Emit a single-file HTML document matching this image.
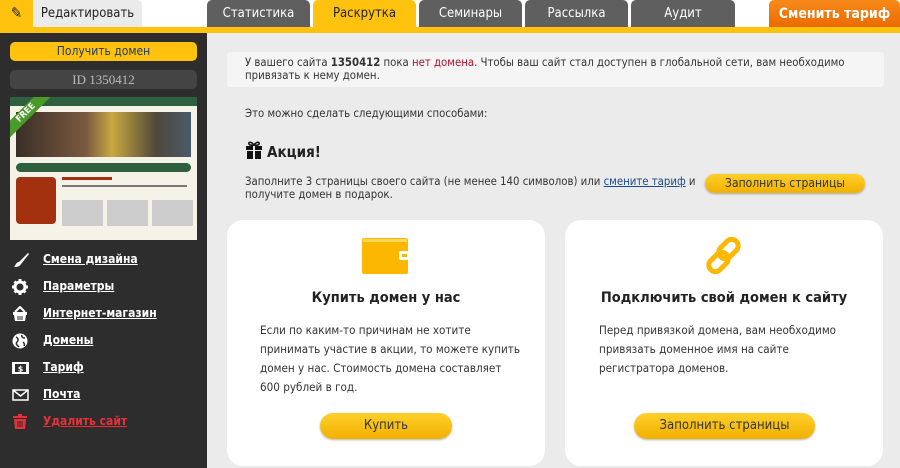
<!DOCTYPE html>
<html><head><meta charset="utf-8"><style>
*{margin:0;padding:0;box-sizing:border-box}
body{width:900px;height:468px;overflow:hidden;background:#ebebeb;font-family:"DejaVu Sans Condensed","DejaVu Sans",sans-serif;font-size:12px;color:#333;position:relative}
.ct{font-size:11.3px}
.top{position:absolute;left:0;top:0;width:900px;height:27px;background:#fff}
.yl{position:absolute;left:0;top:27px;width:900px;height:6px;background:#ffc20e}
.tab{position:absolute;top:0;height:27px;border-radius:5px 5px 0 0;background:#5f5f5f;color:#fff;font-size:13px;text-align:center;line-height:28px;font-family:"DejaVu Sans Condensed",sans-serif}
.side{position:absolute;left:0;top:33px;width:207px;height:435px;background:#2d2d2d}
.btn{position:absolute;border-radius:13px;background:linear-gradient(#ffd02a,#f0b000);box-shadow:0 1px 2px rgba(0,0,0,.3);text-align:center;color:#333}
.menu{position:absolute;left:43px;color:#fff;font-weight:bold;font-size:12px;text-decoration:underline}
.ic{position:absolute;left:12px;top:0}
.card{position:absolute;top:220px;width:318px;height:246px;background:#fff;border-radius:16px}
.card h3{position:absolute;top:70px;left:0;width:100%;text-align:center;font-size:14.5px;color:#222}
.card p{position:absolute;top:101px;left:33px;line-height:19px;font-size:11.6px;color:#333;white-space:nowrap}
</style></head><body>
<div class="top"></div>
<div class="yl"></div>
<div style="position:absolute;left:0;top:0;width:33px;height:27px;background:#ffc20e;color:#222;font-size:15px;text-align:center;line-height:27px">✎</div>
<div class="tab" style="left:33px;width:109px;background:#ebebeb;color:#222;border-radius:0 5px 0 0">Редактировать</div>
<div class="tab" style="left:207px;width:103px">Статистика</div>
<div class="tab" style="left:313px;width:103px;background:#ffc20e;color:#222">Раскрутка</div>
<div class="tab" style="left:419px;width:103px">Семинары</div>
<div class="tab" style="left:525px;width:103px">Рассылка</div>
<div class="tab" style="left:631px;width:104px">Аудит</div>
<div class="tab" style="left:769px;width:131px;background:linear-gradient(#f78a1a,#ec6a00);font-weight:bold;font-size:14px">Сменить тариф</div>
<div class="side">
<div style="position:absolute;left:10px;top:9px;width:187px;height:19px;line-height:19px;font-size:12px;border-radius:5px;background:#ffc20e;color:#1d3a6e;text-align:center">Получить домен</div>
<div style="position:absolute;left:10px;top:37px;width:187px;height:19px;line-height:19px;background:#444;border-radius:5px;text-align:center;color:#bbb;font-size:13px;font-family:'Liberation Serif',serif">ID 1350412</div>
<div style="position:absolute;left:10px;top:64px;width:187px;height:143px;background:#f5f2e8;overflow:hidden">
 <div style="height:9px;background:#2e6040"></div>
 <div style="margin:6px 6px 0;height:45px;background:linear-gradient(90deg,#3a2e28,#7a5a40 40%,#c8a840 55%,#50483a 80%,#4a5a6a)"></div>
 <div style="margin:6px 6px 0;height:9px;background:#2e6040;border-radius:5px"></div>
 <div style="position:absolute;left:6px;top:80px;width:40px;height:47px;background:#a3300f;border-radius:4px"></div>
 <div style="position:absolute;left:52px;top:80px;width:50px;height:3px;background:#a3300f"></div>
 <div style="position:absolute;left:52px;top:88px;width:125px;height:2px;background:#777"></div>
 <div style="position:absolute;left:52px;top:103px;width:41px;height:26px;background:#ccc"></div>
 <div style="position:absolute;left:97px;top:103px;width:41px;height:26px;background:#ccc"></div>
 <div style="position:absolute;left:142px;top:103px;width:41px;height:26px;background:#ccc"></div>
 <div style="position:absolute;left:-14px;top:10px;width:60px;height:12px;background:#4a9a2a;transform:rotate(-45deg);color:#fff;font-size:9px;font-weight:bold;text-align:center;line-height:12px">FREE</div>
</div>
<div style="position:absolute;left:0;top:219px;width:207px;height:14px"><svg class="ic" width="18" height="16"><path d="M16 1 L7 10 L9 12 L17 2Z M7 10 C4 10 4 13 2 15 C6 15 8 14 9 12Z" fill="#fff"/></svg><div class="menu" style="top:0">Смена дизайна</div></div>
<div style="position:absolute;left:0;top:246px;width:207px;height:14px"><svg class="ic" width="18" height="16"><circle cx="8" cy="8" r="5" fill="none" stroke="#fff" stroke-width="3"/><g stroke="#fff" stroke-width="3"><path d="M8 0v3M8 13v3M0 8h3M13 8h3M2.5 2.5l2 2M11.5 11.5l2 2M2.5 13.5l2-2M11.5 4.5l2-2"/></g></svg><div class="menu" style="top:0">Параметры</div></div>
<div style="position:absolute;left:0;top:273px;width:207px;height:14px"><svg class="ic" width="18" height="16"><path d="M3 6 L8 1 L13 6" stroke="#fff" stroke-width="2" fill="none"/><rect x="1" y="6" width="14" height="3" fill="#fff"/><path d="M2 9h12l-1 6H3Z" fill="#fff"/><path d="M6 10v4M8 10v4M10 10v4" stroke="#2d2d2d"/></svg><div class="menu" style="top:0">Интернет-магазин</div></div>
<div style="position:absolute;left:0;top:300px;width:207px;height:14px"><svg class="ic" width="18" height="16"><circle cx="8" cy="8" r="7.5" fill="#fff"/><path d="M4 4c2 1 3 3 1 5s1 4 2 5M10 2c-1 2 1 3 3 3M11 9c1 1 2 2 1 4" stroke="#2d2d2d" stroke-width="1.5" fill="none"/></svg><div class="menu" style="top:0">Домены</div></div>
<div style="position:absolute;left:0;top:327px;width:207px;height:14px"><svg class="ic" width="18" height="16"><rect x="0" y="2" width="17" height="12" fill="#fff"/><rect x="3" y="4" width="11" height="8" fill="#2d2d2d"/><text x="8.5" y="11.5" font-size="8" font-weight="bold" fill="#fff" text-anchor="middle" font-family="DejaVu Sans">$</text></svg><div class="menu" style="top:0">Тариф</div></div>
<div style="position:absolute;left:0;top:354px;width:207px;height:14px"><svg class="ic" width="18" height="16"><rect x="1" y="3" width="15" height="10" fill="none" stroke="#fff" stroke-width="1.5"/><path d="M1 3l7.5 6 7.5-6" stroke="#fff" stroke-width="1.5" fill="none"/></svg><div class="menu" style="top:0">Почта</div></div>
<div style="position:absolute;left:0;top:381px;width:207px;height:14px"><svg class="ic" width="18" height="16"><rect x="1" y="2" width="14" height="2" fill="#e8303a"/><rect x="6" y="0" width="4" height="2" fill="#e8303a"/><path d="M2 5h12l-1 10H3Z" fill="#e8303a"/><path d="M6 7v6M8 7v6M10 7v6" stroke="#2d2d2d"/></svg><div class="menu" style="top:0;color:#e8303a">Удалить сайт</div></div>
</div>
<div class="ct" style="position:absolute;left:227px;top:52px;width:657px;height:35px;background:#f5f5f5;border-radius:3px;padding:4px 18px;line-height:13px">У вашего сайта <b>1350412</b> пока <span style="color:#b0102a">нет домена</span>. Чтобы ваш сайт стал доступен в глобальной сети, вам необходимо привязать к нему домен.</div>
<div class="ct" style="position:absolute;left:245px;top:107px">Это можно сделать следующими способами:</div>
<svg style="position:absolute;left:245px;top:141px" width="18" height="18"><path d="M9 4C6 0 3 1 4 3s5 1 5 1 4 1 5-1-2-3-5 1" stroke="#111" stroke-width="1.5" fill="none"/><rect x="1" y="5" width="16" height="4" fill="#111"/><rect x="2" y="10" width="14" height="8" fill="#111"/><rect x="8" y="5" width="2" height="13" fill="#ebebeb"/></svg>
<div style="position:absolute;left:267px;top:143px;font-size:15px;font-weight:bold;color:#222">Акция!</div>
<div class="ct" style="position:absolute;left:245px;top:175px;width:455px;line-height:13px">Заполните 3 страницы своего сайта (не менее 140 символов) или <u style="color:#1a4a8a">смените&nbsp;тариф</u> и получите домен в подарок.</div>
<div class="btn" style="left:705px;top:174px;width:160px;height:19px;line-height:19px">Заполнить страницы</div>
<div class="card" style="left:227px">
<svg style="position:absolute;left:135px;top:18px" width="48" height="37"><rect x="0" y="0" width="46" height="36" rx="2" fill="#fcb800"/><rect x="1" y="1" width="44" height="3" fill="#ffd75a"/><rect x="37" y="13" width="10" height="9" rx="2" fill="#fff"/><rect x="40" y="16" width="5" height="3" fill="#fcb800"/></svg>
<h3>Купить домен у нас</h3>
<p>Если по каким-то причинам не хотите<br>принимать участие в акции, то можете купить<br>домен у нас. Стоимость домена составляет<br>600 рублей в год.</p>
<div class="btn" style="left:93px;top:193px;width:132px;height:26px;line-height:26px;font-size:13px">Купить</div>
</div>
<div class="card" style="left:565px">
<svg style="position:absolute;left:138px;top:16px" width="42" height="40"><g fill="none" stroke="#fcb800" stroke-width="5"><rect x="19" y="2" width="13" height="22" rx="6.5" transform="rotate(45 25.5 13)"/><rect x="9" y="15" width="13" height="22" rx="6.5" transform="rotate(45 15.5 26)"/></g></svg>
<h3>Подключить свой домен к сайту</h3>
<p style="left:34px">Перед привязкой домена, вам необходимо<br>привязать доменное имя на сайте<br>регистратора доменов.</p>
<div class="btn" style="left:69px;top:193px;width:181px;height:26px;line-height:26px;font-size:13px">Заполнить страницы</div>
</div>
</body></html>
